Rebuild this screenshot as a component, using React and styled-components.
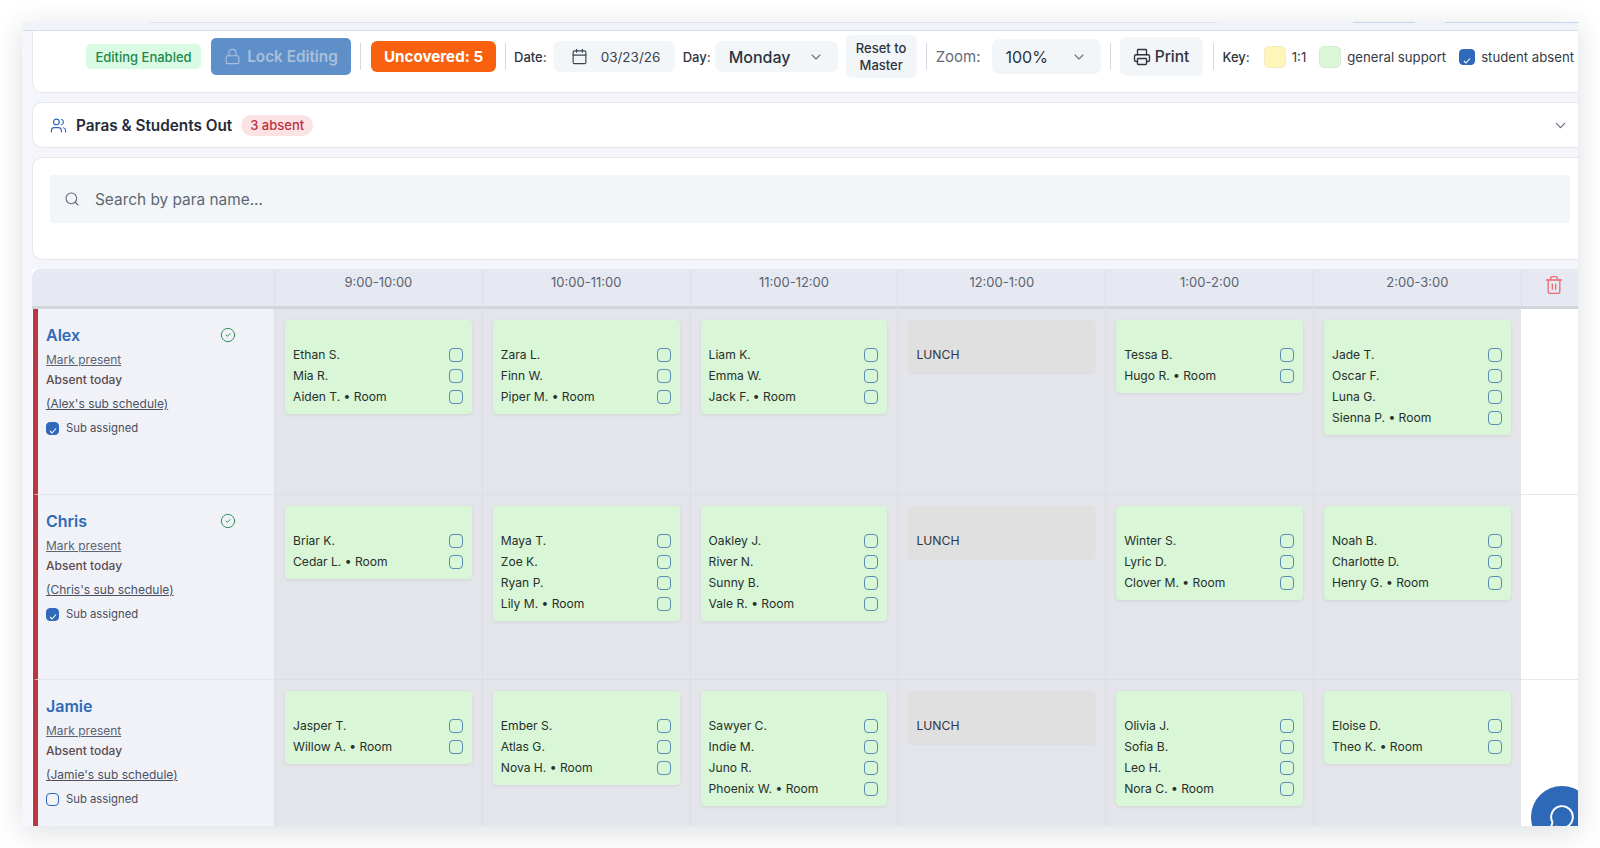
import React from "react";
import styled, { createGlobalStyle } from "styled-components";
import { Lock, Calendar, ChevronDown, Printer, Users, Search, CircleCheck, Trash2, MessageCircle } from "lucide-react";

const Global = createGlobalStyle`
  html, body { margin: 0; padding: 0; background: #fff; height: 848px; overflow: hidden; }
  * { box-sizing: border-box; }
  body { font-family: Inter, "Liberation Sans", sans-serif; color: #1f2937; }
`;
const Page = styled.div`
  width: 1600px; height: 848px; padding: 22px; background: #fff;
`;
const Window = styled.div`
  position: relative; width: 1556px; height: 804px; overflow: hidden; background: #f4f6fb;
  box-shadow: 0 6px 28px rgba(40, 48, 70, 0.16);
`;
const PeekStrip = styled.div`
  display: flex; height: 9px; border-bottom: 1px solid #d8dcea; background: #f1f3fb;
`;
const PeekPart = styled.div`
  flex: ${p => (p.$w ? `0 0 ${p.$w}px` : "1")}; height: 1px; background: ${p => p.$c};
`;
const Content = styled.div`
  display: flex; flex-direction: column; padding-left: 10px; width: 1600px;
`;
const Toolbar = styled.div`
  display: flex; align-items: center; height: 62px; padding: 0 0 10px 53px; background: #fff;
  border: 1px solid #e6e8ee; border-top: none; border-radius: 0 0 0 10px;
`;
const Enabled = styled.div`
  width: 115px; height: 25px; margin-right: 10px; border-radius: 5px; background: #d9fbe3; color: #23884a;
  font-size: 13px; font-weight: 500; display: flex; align-items: center; justify-content: center;
`;
const LockBtn = styled.div`
  width: 140px; height: 37px; border-radius: 5px; background: #5f8fc9; color: #a9bfdc;
  font-size: 15.3px; font-weight: 600; display: flex; align-items: center; justify-content: center; gap: 6px;
`;
const Sep = styled.div`
  width: 1px; height: ${p => p.$h || 27}px; background: #d6d8dd; margin: 0 ${p => p.$r ?? 9}px 0 ${p => p.$l ?? 9}px; flex: none;
`;
const Uncovered = styled.div`
  width: 125px; height: 31px; border-radius: 6px; background: #f9610f; color: #fff; font-size: 15.2px; font-weight: 700;
  display: flex; align-items: center; justify-content: center;
`;
const Label = styled.span`
  font-size: ${p => p.$size || 13}px; font-weight: ${p => p.$fw || 500}; color: ${p => p.$color || "#2f3540"}; margin-right: ${p => p.$mr ?? 6}px; white-space: nowrap;
`;
const Field = styled.div`
  flex: none; width: ${p => p.$w}px; height: ${p => p.$h || 31}px; margin-right: ${p => p.$mr || 0}px; background: #f2f6f9; border-radius: 7px;
  display: flex; align-items: center; justify-content: space-between; padding: 0 14px;
  font-size: ${p => p.$fs || 14}px; font-weight: ${p => p.$fw || 400}; color: #2c3340;
`;
const DateField = styled(Field)`
  justify-content: flex-start; gap: 13px; padding-left: 18px; font-size: 13.5px; color: #3b4250;
`;
const Reset = styled.div`
  flex: none; width: 71px; height: 43px; background: #f2f6f9; border-radius: 6px; font-size: 13px; font-weight: 500; line-height: 16.5px;
  text-align: center; display: flex; align-items: center; justify-content: center; color: #2f3540;
`;
const PrintBtn = styled.div`
  flex: none; width: 83px; height: 39px; background: #f2f6f9; border-radius: 7px; display: flex; align-items: center; justify-content: center; gap: 4px;
  font-size: 15.5px; font-weight: 500; color: #2f3540;
`;
const Swatch = styled.div`
  flex: none; width: 22px; height: 22px; border-radius: 5px; background: ${p => p.$bg}; border: 1px solid ${p => p.$bd}; margin-right: 6px;
`;
const KeyText = styled.span`
  font-size: 13.2px; color: #343a46; margin-right: ${p => p.$mr || 0}px; margin-left: ${p => p.$ml || 0}px; white-space: nowrap;
`;
const Box = styled.span`
  flex: none; display: inline-flex; align-items: flex-end; justify-content: center; overflow: hidden;
  width: ${p => p.$s || 14}px; height: ${p => p.$s || 14}px; border-radius: 4px; background: ${p => (p.$on ? "#2f69ba" : "transparent")};
  border: 1.4px solid ${p => p.$c || "#2f69ba"};
`;
const Check = ({ on, s, c }) => (
  <Box $on={on} $s={s} $c={c}>
    {on && (
      <svg width="10" height="7" viewBox="0 0 10 7" fill="none" stroke="#fff" strokeWidth="1.1"><path d="M2 4l2 2 4-4.5" /></svg>
    )}
  </Box>
);
const Accordion = styled.div`
  height: 46px; margin-top: 9px; display: flex; align-items: center; background: #fff; border: 1px solid #e6e8ee; border-right: none;
  border-radius: 10px 0 0 10px; padding: 0 0 0 17px; font-size: 15.3px; font-weight: 600; color: #252b36; width: 1546px;
`;
const AccTitle = styled.span`
  margin-left: 9px; margin-right: 9px;
`;
const AbsentPill = styled.span`
  height: 21px; padding: 0 9px; border-radius: 11px; background: #fbe3e5; color: #c0303f; font-size: 13px; font-weight: 500; display: flex; align-items: center;
`;
const AccChevron = styled.span`
  margin-left: auto; margin-right: 9px; display: flex; color: #5b6472;
`;
const SearchCard = styled.div`
  height: 103px; margin-top: 9px; background: #fff; border: 1px solid #e6e8ee; border-right: none; border-radius: 10px 0 0 10px; padding: 17px 8px 0 17px; width: 1546px;
`;
const SearchBox = styled.div`
  height: 48px; background: #f2f6f9; border-radius: 4px; display: flex; align-items: center; gap: 15px; padding-left: 14px;
  font-size: 15.4px; color: #5e6673;
`;
const Grid = styled.div`
  margin-top: 9px; width: 1546px; display: grid; grid-template-columns: 242px repeat(6, 207.8px) 1fr; grid-auto-rows: auto; background: #fff;
`;
const Head = styled.div`
  height: 40px; background: #e6e9f1; border-bottom: 3px solid #d2d5db; border-left: ${p => (p.$first ? "none" : "1px solid #dcdfe6")};
  border-radius: ${p => (p.$first ? "8px 0 0 0" : "0")}; padding-top: 5px; text-align: center; font-size: 13px; color: #5b6270;
  display: flex; justify-content: center;
`;
const TrashHead = styled(Head)`
  padding-left: 9px;
`;
const TrashWrap = styled.div`
  margin-top: 1px; color: #ef6a74; display: flex;
`;
const NameCell = styled.div`
  height: ${p => p.$h || 186}px; background: #f0f2f8; border-left: 5px solid #b93745; margin-left: 1px; border-bottom: 1px solid #e2e5ec;
  padding: 14px 0 0 8px; display: flex; flex-direction: column; align-items: flex-start;
`;
const NameRow = styled.div`
  width: 190px; height: 24px; display: flex; align-items: center; justify-content: space-between; color: #2f9159;
`;
const Name = styled.span`
  font-size: 16px; font-weight: 600; color: #2f6ab6;
`;
const Link = styled.span`
  font-size: 12px; color: ${p => p.$c || "#5c6372"}; text-decoration: underline; line-height: 15px; margin-top: ${p => p.$mt || 0}px;
`;
const Absent = styled.span`
  font-size: 12px; font-weight: 500; color: #5b4b52; line-height: 15px; margin-top: 5px;
`;
const SubRow = styled.div`
  display: flex; align-items: center; gap: 7px; margin-top: 10px; font-size: 11.3px; color: #474e5c;
`;
const Cell = styled.div`
  height: ${p => p.$h || 186}px; background: #e3e5ea; border-left: 1px solid #dcdfe4; border-bottom: 1px solid #dcdfe4; padding: 11px 10px 0 10px;
`;
const Card = styled.div`
  background: #d9f6d6; border-radius: 4px; padding: 24px 9px 7px 8px; box-shadow: 0 1px 3px rgba(50, 60, 70, 0.1);
`;
const Lunch = styled.div`
  height: 53px; background: #e0e0e0; border-radius: 4px; padding: 24px 8px 0; font-size: 12.2px; line-height: 21px; color: #2f3540; box-shadow: 0 1px 2px rgba(50, 60, 70, 0.05);
`;
const Student = styled.div`
  display: flex; justify-content: space-between; align-items: center; height: 21px; font-size: 12.1px; color: #27302d;
`;
const Blank = styled.div`
  background: #fff; border-bottom: 1px solid #e6e8ee;
`;
const Fab = styled.div`
  position: absolute; left: 1509px; top: 764px; width: 62px; height: 62px; border-radius: 50%; background: #2e69b8; color: #fff;
  display: flex; align-items: center; justify-content: center;
`;

const times = ["9:00-10:00", "10:00-11:00", "11:00-12:00", "12:00-1:00", "1:00-2:00", "2:00-3:00"];
const rows = [
  { name: "Alex", on: true, ok: true, h: 186, cols: [["Ethan S.", "Mia R.", "Aiden T. • Room"], ["Zara L.", "Finn W.", "Piper M. • Room"], ["Liam K.", "Emma W.", "Jack F. • Room"], null, ["Tessa B.", "Hugo R. • Room"], ["Jade T.", "Oscar F.", "Luna G.", "Sienna P. • Room"]] },
  { name: "Chris", on: true, ok: true, h: 185, cols: [["Briar K.", "Cedar L. • Room"], ["Maya T.", "Zoe K.", "Ryan P.", "Lily M. • Room"], ["Oakley J.", "River N.", "Sunny B.", "Vale R. • Room"], null, ["Winter S.", "Lyric D.", "Clover M. • Room"], ["Noah B.", "Charlotte D.", "Henry G. • Room"]] },
  { name: "Jamie", on: false, ok: false, h: 185, cols: [["Jasper T.", "Willow A. • Room"], ["Ember S.", "Atlas G.", "Nova H. • Room"], ["Sawyer C.", "Indie M.", "Juno R.", "Phoenix W. • Room"], null, ["Olivia J.", "Sofia B.", "Leo H.", "Nora C. • Room"], ["Eloise D.", "Theo K. • Room"]] },
];

export default function App() {
  return (
    <Page>
      <Global />
      <Window>
        <PeekStrip>
          <PeekPart $w={128} $c="#f1f3fb" />
          <PeekPart $w={1067} $c="#dfe2ea" />
          <PeekPart $w={136} $c="#f1f3fb" />
          <PeekPart $w={62} $c="#c9d6f2" />
          <PeekPart $w={30} $c="#f1f3fb" />
          <PeekPart $c="#c9d6f2" />
        </PeekStrip>
        <Content>
          <Toolbar>
            <Enabled>Editing Enabled</Enabled>
            <LockBtn><Lock size={17} strokeWidth={1.6} />Lock Editing</LockBtn>
            <Sep $r={10} />
            <Uncovered>Uncovered: 5</Uncovered>
            <Sep $r={8} />
            <Label>Date:</Label>
            <DateField $w={122} $mr={8}><Calendar size={17} strokeWidth={1.6} />03/23/26</DateField>
            <Label $mr={4}>Day:</Label>
            <Field $w={123} $mr={8} $fs={16} $fw={500}>Monday<ChevronDown size={16} strokeWidth={1.6} color="#667080" /></Field>
            <Reset>Reset to<br />Master</Reset>
            <Sep $l={9} $r={9} />
            <Label $size={15} $color="#636a76" $fw={400} $mr={11}>Zoom:</Label>
            <Field $w={109} $h={35} $fs={16}>100%<ChevronDown size={16} strokeWidth={1.6} color="#667080" /></Field>
            <Sep $l={9} $r={9} />
            <PrintBtn><Printer size={18} strokeWidth={1.8} />Print</PrintBtn>
            <Sep $l={10} $r={9} />
            <Label $mr={14}>Key:</Label>
            <Swatch $bg="#fdf6b8" $bd="#f1ecc4" />
            <KeyText $mr={13}>1:1</KeyText>
            <Swatch $bg="#d9f6d6" $bd="#d3ecd1" />
            <KeyText $mr={13}>general support</KeyText>
            <Check on s={16} />
            <KeyText $ml={6}>student absent</KeyText>
          </Toolbar>
          <Accordion>
            <Users size={17} strokeWidth={1.6} color="#2f6ab6" />
            <AccTitle>Paras &amp; Students Out</AccTitle>
            <AbsentPill>3 absent</AbsentPill>
            <AccChevron><ChevronDown size={17} strokeWidth={1.6} /></AccChevron>
          </Accordion>
          <SearchCard>
            <SearchBox><Search size={16} strokeWidth={1.6} />Search by para name...</SearchBox>
          </SearchCard>
          <Grid>
            <Head $first />
            {times.map(t => <Head key={t}>{t}</Head>)}
            <TrashHead><TrashWrap><Trash2 size={20} strokeWidth={1.6} /></TrashWrap></TrashHead>
            {rows.map(r => (
              <React.Fragment key={r.name}>
                <NameCell $h={r.h}>
                  <NameRow><Name>{r.name}</Name>{r.ok && <CircleCheck size={16} strokeWidth={1.5} />}</NameRow>
                  <Link $mt={5}>Mark present</Link>
                  <Absent>Absent today</Absent>
                  <Link $mt={9} $c="#4b5160">({r.name}'s sub schedule)</Link>
                  <SubRow><Check on={r.on} s={13} />Sub assigned</SubRow>
                </NameCell>
                {r.cols.map((c, i) => (
                  <Cell key={i} $h={r.h}>
                    {c ? (
                      <Card>
                        {c.map(s => <Student key={s}>{s}<Check s={14} c="#5a8db5" /></Student>)}
                      </Card>
                    ) : <Lunch>LUNCH</Lunch>}
                  </Cell>
                ))}
                <Blank />
              </React.Fragment>
            ))}
          </Grid>
        </Content>
        <Fab><MessageCircle size={26} strokeWidth={1.8} /></Fab>
      </Window>
    </Page>
  );
}
